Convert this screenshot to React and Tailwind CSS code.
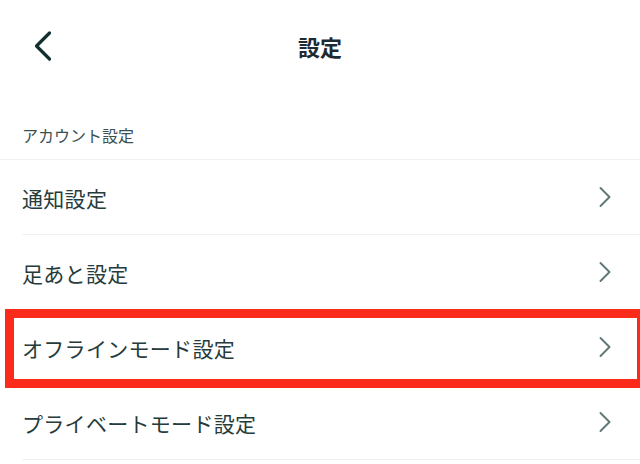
import { ChevronLeft, ChevronRight } from "lucide-react";

const items = [
  { label: "通知設定" },
  { label: "足あと設定" },
  { label: "オフラインモード設定", highlighted: true },
  { label: "プライベートモード設定" },
];

const SettingsRow = ({ label, highlighted }) => (
  <div className="relative">
    <div className="ml-[22px] h-[75px] flex items-center justify-between pr-[17px] border-b border-[#eef2f1]">
      <span className="text-[21px] text-[#263b3b] tracking-[0.3px] translate-y-[2px]">{label}</span>
      <ChevronRight className="w-[36px] h-[36px] text-[#5f7877]" strokeWidth={1.3} />
    </div>
    {highlighted && (
      <div className="absolute left-[5px] -right-[6px] -top-[1px] -bottom-[3px] border-[9px] border-[#fb2b1c] pointer-events-none" />
    )}
  </div>
);

const App = () => {
  return (
    <div className="w-[640px] h-[464px] overflow-hidden bg-white font-['Noto_Sans_CJK_JP',sans-serif]">
      <div className="h-[92px] grid grid-cols-[80px_1fr_80px] items-center">
        <ChevronLeft className="ml-[17px] w-[52px] h-[52px] text-[#123030]" strokeWidth={1.5} />
        <h1 className="text-center text-[22px] font-semibold text-[#1f2a33]">設定</h1>
        <div />
      </div>

      <div className="h-[68px] flex items-center px-[22px] pt-[18px] border-b border-[#eef2f1]">
        <span className="text-[16px] text-[#3b5151]">アカウント設定</span>
      </div>

      {items.map((item) => (
        <SettingsRow key={item.label} label={item.label} highlighted={item.highlighted} />
      ))}
    </div>
  );
};

export default App;
